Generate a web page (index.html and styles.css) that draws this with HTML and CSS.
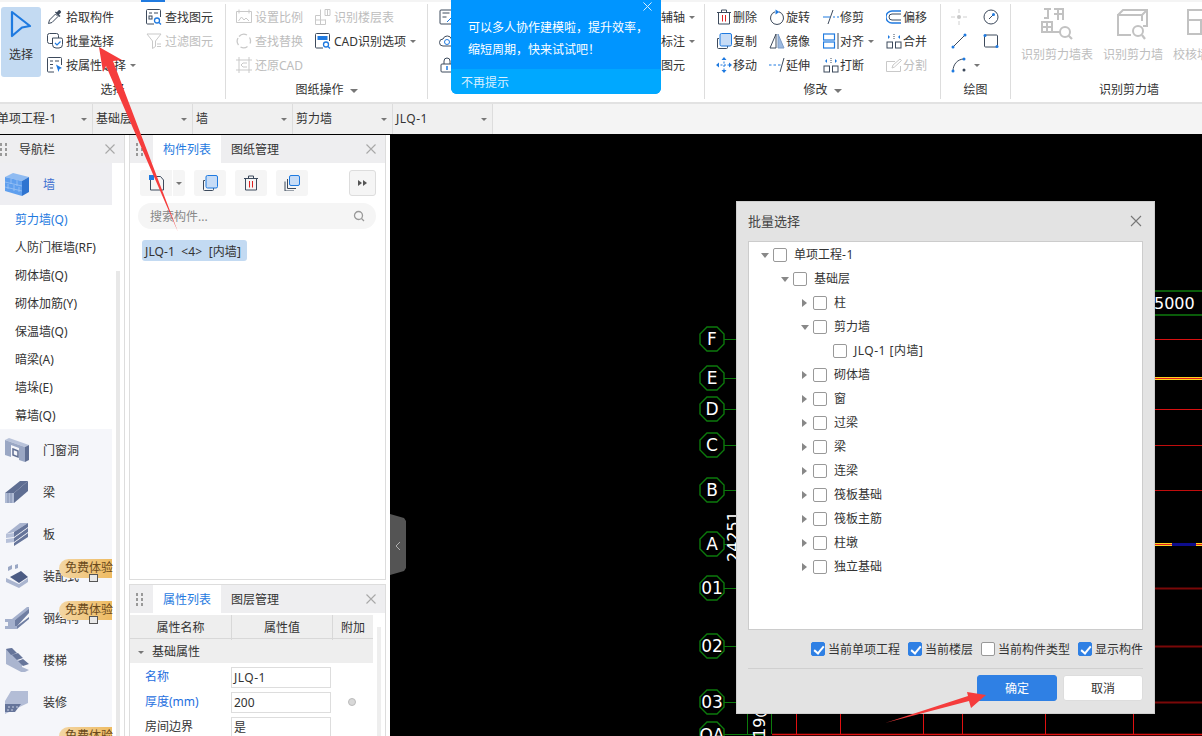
FILE: index.html
```html
<!DOCTYPE html>
<html lang="zh-CN">
  <head>
    <meta charset="UTF-8" />
    <title>批量选择</title>
    <link rel="stylesheet" href="styles.css">
  </head>
  <body>
    <svg class="defs" width="0" height="0">
      <defs>
        <g id="grip" fill="#999"><rect x="0" y="0" width="2" height="3"/><rect x="5" y="0" width="2" height="3"/><rect x="0" y="5" width="2" height="3"/><rect x="5" y="5" width="2" height="3"/><rect x="0" y="10" width="2" height="3"/><rect x="5" y="10" width="2" height="3"/></g>
        <symbol id="i-x" viewBox="0 0 10 10"><path d="M.5.5l9 9M9.500.5l-9 9" stroke="currentColor" stroke-width="1.100"/></symbol>
        <symbol id="i-pick" viewBox="0 0 16 16"><path d="M1.500 14.500l1-3.500 6-6 2.500 2.500-6 6z" fill="#fff" stroke="#3d4a5c"/><path d="M8 3.500l4.500 4.500 1-1-1.500-1.500 2-2c.8-.8-1.500-3-2.300-2.300l-2 2-1-.8z" fill="#3d4a5c"/></symbol>
        <symbol id="i-batch" viewBox="0 0 16 16"><rect x="0.500" y="0.500" width="11" height="10" rx="2" fill="none" stroke="#3d4a5c"/><path d="M5.500 5h8.500a1.500 1.500 0 011.500 1.500v5a3.500 3.500 0 01-3.500 3.500H9a3.500 3.500 0 01-3.500-3.500z" fill="#fff" stroke="#3d4a5c"/><path d="M8 10l2 2 3.500-3.500" fill="none" stroke="#1f7ae0" stroke-width="1.200"/></symbol>
        <symbol id="i-attr" viewBox="0 0 16 16"><path d="M7 15H1.500a1 1 0 01-1-1V1.500a1 1 0 011-1h12a1 1 0 011 1V8" fill="none" stroke="#3d4a5c"/><path d="M3 4h3M8 4h4M3 7.500h3M3 11h3" stroke="#3d4a5c"/><path d="M9 7.500l6 3.500-2.500 1-1 3z" fill="#1f7ae0"/></symbol>
        <symbol id="i-find" viewBox="0 0 16 16"><path d="M8 15H1.500a1 1 0 01-1-1V1.500a1 1 0 011-1h12a1 1 0 011 1V8" fill="none" stroke="#3d4a5c"/><path d="M3 4h3M8 4h4" stroke="#3d4a5c"/><rect x="3" y="7" width="3" height="3" fill="none" stroke="#3d4a5c"/><circle cx="11" cy="11.500" r="2.500" fill="none" stroke="#1f7ae0" stroke-width="1.300"/><path d="M13 13.500l2 2" stroke="#1f7ae0" stroke-width="1.300"/></symbol>
        <symbol id="i-filter" viewBox="0 0 16 16"><path d="M1 1h14l-5.500 7v5.500l-3 2V8z" fill="none" stroke="#c9c9c9"/><path d="M11 11h4M11 13.500h4" stroke="#c9c9c9"/></symbol>
        <symbol id="i-scale" viewBox="0 0 16 16"><path d="M.5 2.500h15v11H.5z" fill="none" stroke="#c9c9c9"/><path d="M3 .5v4M13 .5v4M2.500 12l3-4 2.500 3 2-2 3 3" fill="none" stroke="#c9c9c9"/></symbol>
        <symbol id="i-table" viewBox="0 0 16 16"><path d="M5.500.5v6h-5v9h10v-5M5.500 6.500v9M.5 11h10M10 .5h5v6h-5zM12.500.5v6" fill="none" stroke="#c9c9c9"/></symbol>
        <symbol id="i-replace" viewBox="0 0 16 16"><path d="M3 3.500a6.500 6.500 0 018-1.500M13.500 4.500a6.500 6.500 0 01.5 6M2 5a6.500 6.500 0 00.5 7M4.500 14a6.500 6.500 0 007-.500" fill="none" stroke="#c9c9c9" stroke-width="1.300"/></symbol>
        <symbol id="i-cad" viewBox="0 0 16 16"><path d="M8 15H1.500a1 1 0 01-1-1V1.500a1 1 0 011-1h12a1 1 0 011 1V8" fill="none" stroke="#3d4a5c"/><rect x="2.500" y="3" width="10" height="4" fill="#1f7ae0"/><circle cx="11" cy="11.500" r="2.500" fill="none" stroke="#1f7ae0" stroke-width="1.300"/><path d="M13 13.500l2 2" stroke="#1f7ae0" stroke-width="1.300"/></symbol>
        <symbol id="i-restore" viewBox="0 0 16 16"><path d="M3 0v16M13 0v16M0 3h16M0 13h16M11 6H7l-2 2 2 2h4" fill="none" stroke="#c9c9c9"/></symbol>
        <symbol id="i-doc" viewBox="0 0 16 16"><rect x="1" y="1" width="13" height="14" rx="1" fill="none" stroke="#3d4a5c"/><path d="M3.500 4h7M3.500 8h4" stroke="#3d4a5c"/><path d="M8 13l5-5" stroke="#1f7ae0"/></symbol>
        <symbol id="i-cloud" viewBox="0 0 16 16"><path d="M4 13a3.500 3.500 0 010-7 4.500 4.500 0 018.500 0 3.500 3.500 0 010 7z" fill="none" stroke="#3d4a5c"/><circle cx="8" cy="9" r="2.500" fill="none" stroke="#1f7ae0"/></symbol>
        <symbol id="i-lock" viewBox="0 0 16 16"><path d="M5 7V4a3 3 0 016 0v3" fill="none" stroke="#3d4a5c"/><rect x="2" y="7" width="12" height="8" rx="1" fill="none" stroke="#3d4a5c"/><path d="M8 9v4" stroke="#1f7ae0" stroke-width="1.500"/></symbol>
        <symbol id="i-del" viewBox="0 0 16 16"><path d="M1 3.500h14M5.500 3.500V1h5v2.500" fill="none" stroke="#3d4a5c"/><path d="M2.500 3.500V15h11V3.500" fill="none" stroke="#3d4a5c"/><path d="M6.500 6v6.500M9.500 6v6.500" stroke="#e02020"/></symbol>
        <symbol id="i-rotate" viewBox="0 0 16 16"><path d="M10 2.800A6.500 6.500 0 1 1 6 2.800" fill="none" stroke="#3d4a5c"/><path d="M6.500 .5v5l4-2.500z" fill="#1f7ae0"/></symbol>
        <symbol id="i-trim" viewBox="0 0 16 16"><path d="M0 8h7" stroke="#1f7ae0"/><path d="M10 8h2M14 8h2" stroke="#1f7ae0"/><path d="M5 15L10 1" stroke="#3d4a5c"/></symbol>
        <symbol id="i-offset" viewBox="0 0 16 16"><path d="M15 2H6a6 6 0 000 12h9" fill="none" stroke="#1f7ae0" stroke-width="1.300"/><path d="M15 5H6a3 3 0 000 6h9" fill="none" stroke="#3d4a5c"/></symbol>
        <symbol id="i-copy" viewBox="0 0 16 16"><path d="M3 5.500H1.500v9a1 1 0 001 1h8a1 1 0 001-1V13" fill="none" stroke="#3d4a5c"/><rect x="4" y="0.500" width="11.500" height="12.500" rx="1.500" fill="#c7dcf6" stroke="#1f7ae0"/></symbol>
        <symbol id="i-mirror" viewBox="0 0 16 16"><path d="M1 15L7 1v14z" fill="#fff" stroke="#3d4a5c"/><path d="M15 15L9 1v14z" fill="#9cb9df" stroke="#7d9cc6"/></symbol>
        <symbol id="i-align" viewBox="0 0 16 16"><rect x="0.500" y="1" width="11" height="6" fill="none" stroke="#1f7ae0" stroke-width="1.200"/><rect x="0.500" y="9" width="11" height="6" fill="none" stroke="#1f7ae0" stroke-width="1.200"/><path d="M15 0v16" stroke="#3d4a5c"/></symbol>
        <symbol id="i-merge" viewBox="0 0 16 16"><rect x="1" y="9" width="5.500" height="6" fill="none" stroke="#3d4a5c"/><rect x="9.500" y="9" width="5.500" height="6" fill="none" stroke="#3d4a5c"/><path d="M2 2l2 2-2 2zM14 2l-2 2 2 2z" fill="#1f7ae0"/><path d="M8 1v5" stroke="#3d4a5c" stroke-dasharray="1 1"/></symbol>
        <symbol id="i-move" viewBox="0 0 16 16"><path d="M8 1v14M1 8h14" stroke="#1f7ae0" stroke-dasharray="2 1.500"/><path d="M8 0l2.500 3h-5zM8 16l-2.500-3h5zM0 8l3-2.500v5zM16 8l-3 2.500v-5z" fill="#1f7ae0"/></symbol>
        <symbol id="i-extend" viewBox="0 0 16 16"><path d="M0 8h2.500M4.500 8h2.500M9 8h2.500" stroke="#1f7ae0"/><path d="M11 15L15 1" stroke="#3d4a5c"/></symbol>
        <symbol id="i-break" viewBox="0 0 16 16"><rect x="1" y="9" width="5.500" height="6" fill="none" stroke="#3d4a5c"/><rect x="9.500" y="9" width="5.500" height="6" fill="none" stroke="#3d4a5c"/><path d="M4 2L2 4l2 2zM12 2l2 2-2 2z" fill="#1f7ae0"/><path d="M8 1v5" stroke="#3d4a5c" stroke-dasharray="1 1"/></symbol>
        <symbol id="i-split" viewBox="0 0 16 16"><path d="M14.500 9v5.500h-14v-10H9" fill="none" stroke="#c9c9c9"/><path d="M6 11l1-3 7-6 1.500 1.500-7 6.500z" fill="none" stroke="#c9c9c9"/></symbol>
        <symbol id="i-point" viewBox="0 0 16 16"><path d="M0 8h4M12 8h4M8 0v4M8 12v4" stroke="#d0d0d0"/><circle cx="8" cy="8" r="2" fill="#c8c8c8"/></symbol>
        <symbol id="i-circle" viewBox="0 0 16 16"><circle cx="8" cy="8" r="7" fill="none" stroke="#3d4a5c"/><path d="M6 10l4-4" stroke="#3d4a5c"/><circle cx="10.500" cy="5.500" r="1.500" fill="#1f7ae0"/></symbol>
        <symbol id="i-line" viewBox="0 0 16 16"><path d="M2 14L14 2" stroke="#3d4a5c"/><circle cx="2" cy="14" r="1.500" fill="#1f7ae0"/><circle cx="14" cy="2" r="1.500" fill="#1f7ae0"/></symbol>
        <symbol id="i-rect" viewBox="0 0 16 16"><rect x="1.500" y="2" width="13" height="12" rx="1" fill="none" stroke="#3d4a5c"/><circle cx="2" cy="2.500" r="1.500" fill="#1f7ae0"/><circle cx="14" cy="13.500" r="1.500" fill="#1f7ae0"/></symbol>
        <symbol id="i-arc" viewBox="0 0 16 16"><path d="M2 14C2 7 7 2 13 2" fill="none" stroke="#3d4a5c"/><circle cx="2" cy="14" r="1.500" fill="#1f7ae0"/><circle cx="13" cy="2" r="1.500" fill="#1f7ae0"/><circle cx="13" cy="13" r="1.500" fill="#3d4a5c"/></symbol>
        <symbol id="b-table" viewBox="0 0 32 32"><path d="M3 1h7M7 1v9H3M13 1h9v11M17 1v11M13 6h9M1 14h10v10H1zM6 14v10M1 19h10M11 24h10" fill="none" stroke="#c2c2c2" stroke-width="2"/><circle cx="24" cy="24" r="5" fill="#fff" stroke="#c2c2c2" stroke-width="2"/><path d="M27.500 27.500L31 31" stroke="#c2c2c2" stroke-width="2.200"/></symbol>
        <symbol id="b-wall" viewBox="0 0 32 32"><path d="M14 27H1V7h24v6M1 7l5-5h24v16l-4 0M25 7l5-5" fill="none" stroke="#c2c2c2" stroke-width="2"/><circle cx="21" cy="23" r="5" fill="#fff" stroke="#c2c2c2" stroke-width="2"/><path d="M25 27l3 4" stroke="#c2c2c2" stroke-width="2.200"/></symbol>
        <symbol id="b-check" viewBox="0 0 32 32"><path d="M1 2h30v24H1zM1 12h30M14 12v14" fill="none" stroke="#c2c2c2" stroke-width="2"/></symbol>
        <symbol id="n-wall" viewBox="0 0 24 24"><path d="M0 5L8 1l16 4-7 4z" fill="#8fbbf2"/><path d="M0 5l17 4v15L0 19z" fill="#5f9fee"/><path d="M17 9l7-4v15l-7 4z" fill="#2f74d0"/><path d="M0 10l17 4M0 15l17 4M6 7v5M12 8v6M3 12v5M9 13v6M14 15v5" stroke="#9cc3f4" fill="none" stroke-width=".8"/></symbol>
        <symbol id="n-door" viewBox="0 0 24 24"><path d="M0 2l4-2 20 7-4 2z" fill="#b9c3da"/><path d="M0 2l20 7v15L14 22V10L6 7v12l-6-2z" fill="#9aa7c4"/><path d="M20 9l4-2v15l-4 2z" fill="#5f6e92"/><path d="M8 11l5 2v6l-5-2z" fill="none" stroke="#5f6e92" stroke-width="1.500"/></symbol>
        <symbol id="n-beam" viewBox="0 0 24 24"><path d="M0 13L15 1h8L9 13z" fill="#5f6e92"/><path d="M0 13h9v10H0z" fill="#b0bbd4"/><path d="M9 13L23 1v10L9 23z" fill="#5f6e92"/><path d="M3 13v10M6 13v10" stroke="#8290b0"/></symbol>
        <symbol id="n-slab" viewBox="0 0 24 24"><path d="M1 12L15 1h8L9 10z" fill="#a9b4cf"/><path d="M1 12l8-1v4l-8 1zM1 17l8-1v4l-8 1z" fill="#b7c1d9"/><path d="M9 10L23 1v4L9 15zM9 16L23 6v4L9 20zM9 21l14-10v4L9 24z" fill="#66759a"/></symbol>
        <symbol id="n-asm" viewBox="0 0 24 24"><path d="M5 13l11-6 7 6-9 6z" fill="#4b5b83"/><path d="M1 14l13 6 9-6v4l-9 6-13-6z" fill="#aab5cf"/><path d="M3 3l4-2v4L3 7zM10 1l3-1v4l-3 1z" fill="#9aa7c4"/></symbol>
        <symbol id="n-steel" viewBox="0 0 24 24"><path d="M0 13h7L22 1h2v4L10 14v6h2v3H0v-3h3v-4H0z" fill="#a4b0cc"/><path d="M10 14L24 3v4L12 20h-2zM12 20l12-9v2L12 23z" fill="#6f7ea2"/></symbol>
        <symbol id="n-stair" viewBox="0 0 24 24"><path d="M1 1l6-1v5l5 2v5l5 2v5l7 3-6 3L1 16z" fill="#aab5cf"/><path d="M1 1l6-1 5 5-6 2zM7 7l6-2 5 5-6 2zM13 13l5-2 6 5-6 2z" fill="#66759a"/></symbol>
        <symbol id="n-finish" viewBox="0 0 24 24"><path d="M6 1h17v12L4 22 0 24V11z" fill="#b3bdd6"/><path d="M0 14h16l-6 8H0z" fill="#66759a"/><path d="M3 17h2M7 17h2M11 17h2M2 20h2M6 20h2" stroke="#c9d1e4"/></symbol>
      </defs>
    </svg>

    <header class="ribbon">
      <div class="ribbon-strip"><i></i></div>
      <div class="groups">
        <section class="group g-select">
          <div class="tools">
            <div class="select-btn">
              <svg width="22" height="28" viewBox="0 0 22 28"><path d="M2 2l18 14-8 1.500L2 26z" fill="#c7dcf6" stroke="#1f7ae0" stroke-width="2.200" stroke-linejoin="round"/></svg>
              <span>选择</span>
            </div>
            <div class="col c99">
              <div class="tool"><svg class="ic"><use href="#i-pick"/></svg><span>拾取构件</span></div>
              <div class="tool"><svg class="ic"><use href="#i-batch"/></svg><span>批量选择</span></div>
              <div class="tool"><svg class="ic"><use href="#i-attr"/></svg><span>按属性选择</span><b class="tri"></b></div>
            </div>
            <div class="col">
              <div class="tool"><svg class="ic"><use href="#i-find"/></svg><span>查找图元</span></div>
              <div class="tool off"><svg class="ic"><use href="#i-filter"/></svg><span>过滤图元</span></div>
            </div>
          </div>
          <div class="group-label">选择</div>
        </section>
        <section class="group g-drawing">
          <div class="tools">
            <div class="col c79">
              <div class="tool off"><svg class="ic"><use href="#i-scale"/></svg><span>设置比例</span></div>
              <div class="tool off"><svg class="ic"><use href="#i-replace"/></svg><span>查找替换</span></div>
              <div class="tool off"><svg class="ic"><use href="#i-restore"/></svg><span>还原CAD</span></div>
            </div>
            <div class="col">
              <div class="tool off"><svg class="ic"><use href="#i-table"/></svg><span>识别楼层表</span></div>
              <div class="tool"><svg class="ic"><use href="#i-cad"/></svg><span>CAD识别选项</span><b class="tri"></b></div>
            </div>
          </div>
          <div class="group-label">图纸操作 <b class="tri"></b></div>
        </section>
        <section class="group g-axis">
          <div class="tools">
            <div class="col c222">
              <div class="tool"><svg class="ic"><use href="#i-doc"/></svg></div>
              <div class="tool"><svg class="ic"><use href="#i-cloud"/></svg></div>
              <div class="tool"><svg class="ic"><use href="#i-lock"/></svg></div>
            </div>
            <div class="col">
              <div class="tool"><span>辅轴</span><b class="tri"></b></div>
              <div class="tool"><span>标注</span><b class="tri"></b></div>
              <div class="tool"><span>图元</span></div>
            </div>
          </div>
        </section>
        <section class="group g-edit">
          <div class="tools tight">
            <div class="col c53">
              <div class="tool"><svg class="ic"><use href="#i-del"/></svg><span>删除</span></div>
              <div class="tool"><svg class="ic"><use href="#i-copy"/></svg><span>复制</span></div>
              <div class="tool"><svg class="ic"><use href="#i-move"/></svg><span>移动</span></div>
            </div>
            <div class="col c54">
              <div class="tool"><svg class="ic"><use href="#i-rotate"/></svg><span>旋转</span></div>
              <div class="tool"><svg class="ic"><use href="#i-mirror"/></svg><span>镜像</span></div>
              <div class="tool"><svg class="ic"><use href="#i-extend"/></svg><span>延伸</span></div>
            </div>
            <div class="col c63">
              <div class="tool"><svg class="ic"><use href="#i-trim"/></svg><span>修剪</span></div>
              <div class="tool"><svg class="ic"><use href="#i-align"/></svg><span>对齐</span><b class="tri"></b></div>
              <div class="tool"><svg class="ic"><use href="#i-break"/></svg><span>打断</span></div>
            </div>
            <div class="col">
              <div class="tool"><svg class="ic"><use href="#i-offset"/></svg><span>偏移</span></div>
              <div class="tool"><svg class="ic"><use href="#i-merge"/></svg><span>合并</span></div>
              <div class="tool off"><svg class="ic"><use href="#i-split"/></svg><span>分割</span></div>
            </div>
          </div>
          <div class="group-label">修改 <b class="tri"></b></div>
        </section>
        <section class="group g-draw">
          <div class="tools">
            <div class="col c32">
              <div class="tool"><svg class="ic"><use href="#i-point"/></svg></div>
              <div class="tool"><svg class="ic"><use href="#i-line"/></svg></div>
              <div class="tool"><svg class="ic"><use href="#i-arc"/></svg><b class="tri"></b></div>
            </div>
            <div class="col">
              <div class="tool"><svg class="ic"><use href="#i-circle"/></svg></div>
              <div class="tool"><svg class="ic"><use href="#i-rect"/></svg></div>
            </div>
          </div>
          <div class="group-label">绘图</div>
        </section>
        <section class="group g-shear">
          <div class="tools big-tools">
            <div class="big off"><svg width="32" height="32"><use href="#b-table"/></svg><span>识别剪力墙表</span></div>
            <div class="big off"><svg width="32" height="32"><use href="#b-wall"/></svg><span>识别剪力墙</span></div>
            <div class="big off"><svg width="32" height="32"><use href="#b-check"/></svg><span>校核墙图元</span></div>
          </div>
          <div class="group-label">识别剪力墙</div>
        </section>
      </div>
    </header>

    <div class="selectors">
      <div class="sel first"><span>单项工程<i class="latin">-1</i></span><b class="tri"></b></div>
      <div class="sel"><span>基础层</span><b class="tri"></b></div>
      <div class="sel"><span>墙</span><b class="tri"></b></div>
      <div class="sel"><span>剪力墙</span><b class="tri"></b></div>
      <div class="sel"><span class="latin">JLQ-1</span><b class="tri"></b></div>
    </div>

    <main class="workspace">
      <aside class="nav">
        <div class="nav-head">
          <svg class="grip" width="7" height="13"><use href="#grip"/></svg>
          <span class="nav-title">导航栏</span>
          <svg class="x"><use href="#i-x"/></svg>
        </div>
        <div class="nav-body">
          <div class="nav-list">
            <div class="nav-big current"><svg><use href="#n-wall"/></svg><span>墙</span></div>
            <div class="nav-sub on">剪力墙(Q)</div>
            <div class="nav-sub">人防门框墙(RF)</div>
            <div class="nav-sub">砌体墙(Q)</div>
            <div class="nav-sub">砌体加筋(Y)</div>
            <div class="nav-sub">保温墙(Q)</div>
            <div class="nav-sub">暗梁(A)</div>
            <div class="nav-sub">墙垛(E)</div>
            <div class="nav-sub">幕墙(Q)</div>
            <div class="nav-big"><svg><use href="#n-door"/></svg><span>门窗洞</span></div>
            <div class="nav-big"><svg><use href="#n-beam"/></svg><span>梁</span></div>
            <div class="nav-big"><svg><use href="#n-slab"/></svg><span>板</span></div>
            <div class="nav-big"><svg><use href="#n-asm"/></svg><span>装配式</span><em class="lock"></em><em class="badge">免费体验</em></div>
            <div class="nav-big"><svg><use href="#n-steel"/></svg><span>钢结构</span><em class="lock"></em><em class="badge">免费体验</em></div>
            <div class="nav-big"><svg><use href="#n-stair"/></svg><span>楼梯</span></div>
            <div class="nav-big"><svg><use href="#n-finish"/></svg><span>装修</span></div>
            <div class="nav-big"><em class="badge">免费体验</em></div>
          </div>
          <div class="nav-scroll"></div>
        </div>
      </aside>

      <div class="panels">
        <section class="panel p-list">
          <div class="panel-head">
            <svg class="grip" width="7" height="13"><use href="#grip"/></svg>
            <span class="tab active">构件列表</span>
            <span class="tab">图纸管理</span>
            <svg class="x"><use href="#i-x"/></svg>
          </div>
          <div class="list-tools">
            <div class="tbtn split">
              <svg width="16" height="16" viewBox="0 0 16 16"><path d="M1.500 3.500v11.500h13V5l-3-3.500H6" fill="none" stroke="#3d4a5c"/><rect x="0" y="0" width="5" height="5" fill="#1f7ae0"/></svg>
              <span class="split-arrow"><b class="tri"></b></span>
            </div>
            <div class="tbtn"><svg width="16" height="16"><use href="#i-copy"/></svg></div>
            <div class="tbtn"><svg width="16" height="16"><use href="#i-del"/></svg></div>
            <div class="tbtn"><svg width="16" height="16" viewBox="0 0 16 16"><path d="M3.500 4v9.500H12M1 6.500V16h9" fill="none" stroke="#3d4a5c"/><rect x="5.500" y="0.500" width="10" height="10" rx="1.500" fill="#c7dcf6" stroke="#1f7ae0"/></svg></div>
            <div class="tbtn more"><i></i><i></i></div>
          </div>
          <div class="search">
            <span>搜索构件...</span>
            <svg width="12" height="12" viewBox="0 0 12 12"><circle cx="5.500" cy="5.500" r="4" fill="none" stroke="#999" stroke-width="1.300"/><path d="M8.500 8.500L11 11" stroke="#999" stroke-width="1.300"/></svg>
          </div>
          <div class="list-item">JLQ-1&nbsp; &lt;4&gt;&nbsp; [内墙]</div>
        </section>
        <section class="panel p-attr">
          <div class="panel-head">
            <svg class="grip" width="7" height="13"><use href="#grip"/></svg>
            <span class="tab active">属性列表</span>
            <span class="tab">图层管理</span>
            <svg class="x"><use href="#i-x"/></svg>
          </div>
          <div class="attr-body">
            <div class="attr-table">
              <div class="attr-top"><span>属性名称</span><span>属性值</span><span>附加</span></div>
              <div class="attr-section"><b class="tri"></b>基础属性</div>
              <div class="attr-row"><label class="blue">名称</label><div class="val latin">JLQ-1</div><div></div></div>
              <div class="attr-row"><label class="blue">厚度(mm)</label><div class="val">200</div><div class="dot-cell"><i></i></div></div>
              <div class="attr-row"><label>房间边界</label><div class="val">是</div><div></div></div>
            </div>
            <div class="attr-scroll"></div>
          </div>
        </section>
      </div>

      <div class="canvas">
        <svg width="812" height="601" viewBox="390 135 812 601">
          <defs><polygon id="bub" points="-5,-12 5,-12 12,-5 12,5 5,12 -5,12 -12,5 -12,-5" fill="#000" stroke="#0c7a0c" stroke-width="1.400"/></defs>
          <path d="M390 514l14 4 2 3v47l-2 3-14 4z" fill="#545454"/>
          <path d="M400 542l-4 4 4 4" fill="none" stroke="#b0b0b0"/>
          <g stroke="#0c7a0c" stroke-width="1">
            <path d="M724 339.500h20M724 378.500h20M724 409.500h20M724 445.500h20M724 490.500h20M724 544.500h20M724 588.500h20M724 646.500h20M724 702.500h20M724 734.500h40"/>
          </g>
          <path d="M1155 291h47M1155 315h47" stroke="#0a5c0a" stroke-width="2"/>
          <path d="M1155 339.500h47M1155 409.500h47" stroke="#d81010"/>
          <path d="M1155 445.500h47M1155 490.500h47" stroke="#c00d0d"/>
          <path d="M1155 378.500h47M1155 544.500h47" stroke="#ffd21f" stroke-width="3"/>
          <path d="M1155 378.500h47M1155 544.500h47" stroke="#e02020" stroke-width="1"/>
          <path d="M1172 544.500h24" stroke="#0d0d8c" stroke-width="3"/>
          <path d="M1155 588.500h47M1155 646.500h47M1155 702.500h47" stroke="#7a0808" stroke-width="2"/>
          <path d="M772 734.500h430" stroke="#e01010" stroke-width="1.500"/>
          <path d="M796.500 714v20M840.500 714v20M923.500 714v20M962.500 714v20M1045.500 714v20M1133.500 714v20" stroke="#e01010"/>
          <path d="M747.500 714v20M771.500 714v20" stroke="#0c7a0c"/>
          <g class="bubbles">
            <use href="#bub" x="712" y="339"/><text x="712" y="345">F</text>
            <use href="#bub" x="712" y="378"/><text x="712" y="384">E</text>
            <use href="#bub" x="712" y="409"/><text x="712" y="415">D</text>
            <use href="#bub" x="712" y="445"/><text x="712" y="451">C</text>
            <use href="#bub" x="712" y="490"/><text x="712" y="496">B</text>
            <use href="#bub" x="712" y="544"/><text x="712" y="550">A</text>
            <use href="#bub" x="712" y="588"/><text x="712" y="594">01</text>
            <use href="#bub" x="712" y="646"/><text x="712" y="652">02</text>
            <use href="#bub" x="712" y="702"/><text x="712" y="708">03</text>
            <use href="#bub" x="712" y="734"/><text x="712" y="741">QA</text>
          </g>
          <text class="dim" x="1154" y="309">5000</text>
          <text class="dim" transform="translate(739 562) rotate(-90)">24251</text>
          <text class="dim" transform="translate(765 738) rotate(-90)">19@</text>
        </svg>
      </div>
    </main>

    <div class="tip">
      <svg class="tip-x" width="9" height="9"><use href="#i-x"/></svg>
      <div class="tip-body">
        <p>可以多人协作建模啦，提升效率，</p>
        <p>缩短周期，快来试试吧！</p>
      </div>
      <div class="tip-foot">不再提示</div>
    </div>

    <div class="dialog">
      <div class="dialog-head">
        <span>批量选择</span>
        <svg width="12" height="12" viewBox="0 0 12 12"><path d="M1 1l10 10M11 1L1 11" stroke="#777" stroke-width="1.100"/></svg>
      </div>
      <div class="tree">
        <div class="node lv0"><b class="open"></b><i class="cb"></i><span>单项工程<i class="latin">-1</i></span></div>
        <div class="node lv1"><b class="open"></b><i class="cb"></i><span>基础层</span></div>
        <div class="node lv2"><b class="shut"></b><i class="cb"></i><span>柱</span></div>
        <div class="node lv2"><b class="open"></b><i class="cb"></i><span>剪力墙</span></div>
        <div class="node lv3"><b></b><i class="cb"></i><span class="latin">JLQ-1 [内墙]</span></div>
        <div class="node lv2"><b class="shut"></b><i class="cb"></i><span>砌体墙</span></div>
        <div class="node lv2"><b class="shut"></b><i class="cb"></i><span>窗</span></div>
        <div class="node lv2"><b class="shut"></b><i class="cb"></i><span>过梁</span></div>
        <div class="node lv2"><b class="shut"></b><i class="cb"></i><span>梁</span></div>
        <div class="node lv2"><b class="shut"></b><i class="cb"></i><span>连梁</span></div>
        <div class="node lv2"><b class="shut"></b><i class="cb"></i><span>筏板基础</span></div>
        <div class="node lv2"><b class="shut"></b><i class="cb"></i><span>筏板主筋</span></div>
        <div class="node lv2"><b class="shut"></b><i class="cb"></i><span>柱墩</span></div>
        <div class="node lv2"><b class="shut"></b><i class="cb"></i><span>独立基础</span></div>
      </div>
      <div class="options">
        <div class="opt"><i class="cb checked"></i><span>当前单项工程</span></div>
        <div class="opt"><i class="cb checked"></i><span>当前楼层</span></div>
        <div class="opt"><i class="cb"></i><span>当前构件类型</span></div>
        <div class="opt"><i class="cb checked"></i><span>显示构件</span></div>
      </div>
      <div class="dialog-foot">
        <button class="btn primary">确定</button>
        <button class="btn">取消</button>
      </div>
    </div>

    <svg class="arrows" width="1202" height="736">
      <polygon points="99,47 122,60 113,61 178,232 106,66 103,72" fill="#f53c3c"/>
      <polygon points="986,695 971,708 969,701 885,723 968,696 967,692" fill="#f53c3c"/>
    </svg>
  </body>
</html>
```

FILE: styles.css
```css
* {
  box-sizing: border-box;
}

html, body {
  margin: 0;
  height: 736px;
  overflow: hidden;
}

body {
  position: relative;
  width: 1202px;
  background: #fff;
  font-family: "Noto Sans", "Noto Sans CJK SC", sans-serif;
  font-size: 12px;
  line-height: 16px;
  color: #333;
}

p {
  margin: 0;
}

i.latin,
.latin {
  font-style: normal;
  letter-spacing: .5px;
}

.defs {
  position: absolute;
}

.tri {
  display: inline-block;
  width: 0;
  height: 0;
  border-left: 3px solid transparent;
  border-right: 3px solid transparent;
  border-top: 3px solid #777;
  vertical-align: middle;
}

.x {
  flex: none;
  width: 10px;
  height: 10px;
  margin-left: auto;
  margin-right: 9px;
  color: #a8a8a8;
}

/* ribbon */
.ribbon {
  height: 104px;
  border-bottom: 2px solid #e2e2e2;
  overflow: hidden;
}

.ribbon-strip {
  height: 4px;
  border-top: 2px solid #f4f4f4;
}

.ribbon-strip i {
  display: block;
  width: 24px;
  height: 2px;
  margin: -2px 0 0 141px;
  background: #1f7ae0;
}

.groups {
  display: flex;
}

.group {
  flex: none;
  height: 95px;
  border-right: 1px solid #ddd;
}

.g-select { width: 226px; }
.g-drawing { width: 202px; }
.g-axis { width: 277px; }
.g-edit { width: 236px; }
.g-draw { width: 70px; }
.g-shear { width: 236px; border-right: none; }

.tools {
  display: flex;
  height: 75px;
  padding-top: 1px;
}

.g-drawing .tools,
.g-draw .tools,
.g-shear .tools { padding-left: 10px; }
.g-axis .tools,
.g-edit .tools { padding-left: 11px; }

.col.c99 { width: 99px; }
.col.c79 { width: 79px; }
.col.c222 { width: 222px; }
.col.c53 { width: 53px; }
.col.c54 { width: 54px; }
.col.c63 { width: 63px; }
.col.c32 { width: 32px; }

.tool {
  display: flex;
  align-items: center;
  height: 24px;
  white-space: nowrap;
}

.tool span,
.nav-title,
.nav-big span,
.opt span,
.search span {
  padding-top: 2px;
}

.tool .ic {
  flex: none;
  width: 16px;
  height: 16px;
  margin-right: 3px;
}

.tight .tool .ic {
  margin-right: 1px;
}

.tool .tri {
  margin-left: 4px;
}

.off {
  color: #bdbdbd;
}

.select-btn {
  display: flex;
  flex-direction: column;
  align-items: center;
  width: 40px;
  height: 70px;
  margin: 2px 6px 0 1px;
  padding-top: 3px;
  border-radius: 3px;
  background: #c3daf2;
}

.select-btn span {
  margin-top: 9px;
}

.group-label {
  height: 20px;
  padding-top: 1px;
  line-height: 20px;
  text-align: center;
}

.group-label .tri {
  margin-left: 3px;
  border-left-width: 4px;
  border-right-width: 4px;
  border-top-width: 4px;
}

.big-tools {
  gap: 10px;
}

.big {
  display: flex;
  flex-direction: column;
  align-items: center;
  flex: none;
  padding-top: 3px;
  white-space: nowrap;
}

.big span {
  margin-top: 7px;
}

/* drop downs under the ribbon */
.selectors {
  display: flex;
  height: 31px;
  background: #f4f4f4;
  border-bottom: 1px solid #000;
}

.sel {
  display: flex;
  align-items: center;
  justify-content: space-between;
  width: 100px;
  padding: 0 5px 0 3px;
  background: #f0f0f0;
  border-right: 1px solid #ddd;
}

.sel.first {
  width: 93px;
  padding-left: 0;
  overflow: hidden;
}

.sel.first > span {
  margin-left: -3px;
}

/* workspace */
.workspace {
  display: flex;
  height: 601px;
  background: #fff;
}

.nav {
  flex: none;
  width: 125px;
  border-right: 1px solid #ddd;
  overflow: hidden;
}

.nav-head {
  display: flex;
  align-items: center;
  height: 28px;
  background: #eeeef0;
}

.nav-title {
  margin-left: 12px;
}

.nav-body {
  display: flex;
}

.nav-list {
  flex: none;
  width: 112px;
}

.nav-big {
  position: relative;
  display: flex;
  align-items: center;
  height: 42px;
  padding-left: 5px;
  background: #f5f6fa;
  white-space: nowrap;
}

.nav-big svg {
  flex: none;
  width: 24px;
  height: 24px;
  margin-right: 14px;
}

.nav-big.current {
  background: #eeeef2;
  color: #3c6fd0;
}

.nav-sub {
  height: 28px;
  padding: 1px 0 0 15px;
  line-height: 28px;
  background: #fff;
  white-space: nowrap;
}

.nav-sub.on {
  color: #1f7ae0;
}

.badge {
  position: absolute;
  top: 4px;
  right: 0;
  width: 53px;
  height: 19px;
  padding-left: 6px;
  border-radius: 10px 0 0 10px;
  background: linear-gradient(90deg, #f3d6a4, #eebb62);
  color: #6a4a1c;
  font-style: normal;
  line-height: 18px;
}

.lock {
  position: absolute;
  top: 19px;
  left: 89px;
  width: 9px;
  height: 8px;
  border: 1px solid #555;
  background: #e8e8e8;
  z-index: 1;
}

.nav-scroll {
  flex: none;
  width: 4px;
  margin: 108px 0 0 4px;
  background: #e8e8e8;
}

.panels {
  display: flex;
  flex-direction: column;
  flex: none;
  width: 265px;
  padding: 0 4px;
  background: #fff;
}

.panel {
  flex: none;
  width: 257px;
  border: 1px solid #ddd;
  border-top: none;
}

.p-list {
  height: 445px;
}

.p-attr {
  height: 152px;
  margin-top: 4px;
  border-top: 1px solid #ddd;
  border-bottom: none;
  overflow: hidden;
}

.panel-head {
  display: flex;
  align-items: center;
  height: 28px;
  background: #eeeef0;
}

.grip {
  flex: none;
}

.panel-head .grip {
  margin: 0 10px 0 6px;
}

.tab {
  height: 28px;
  padding: 1px 10px 0;
  line-height: 28px;
}

.tab.active {
  background: #fff;
  color: #1f7ae0;
}

.list-tools {
  display: flex;
  gap: 9px;
  margin: 7px 0 0 10px;
}

.tbtn {
  display: flex;
  align-items: center;
  justify-content: center;
  width: 32px;
  height: 26px;
  border-radius: 3px;
  background: #f5f5f5;
}

.tbtn.split {
  justify-content: flex-start;
  width: 45px;
  padding-left: 9px;
}

.split-arrow {
  display: flex;
  align-items: center;
  justify-content: center;
  width: 13px;
  height: 26px;
  margin-left: 7px;
  border-left: 1px solid #fff;
}

.tbtn.more {
  gap: 1px;
  width: 27px;
  margin-left: 32px;
  border: 1px solid #ddd;
}

.tbtn.more i {
  width: 0;
  height: 0;
  border-top: 3px solid transparent;
  border-bottom: 3px solid transparent;
  border-left: 4px solid #555;
}

.search {
  display: flex;
  align-items: center;
  justify-content: space-between;
  width: 238px;
  height: 26px;
  margin: 7px 0 0 8px;
  padding: 0 11px 0 12px;
  border-radius: 13px;
  background: #f5f5f5;
  color: #888;
}

.list-item {
  width: 105px;
  height: 21px;
  margin: 11px 0 0 12px;
  padding: 1px 0 0 3px;
  border-radius: 3px;
  background: #c3daf2;
  letter-spacing: .1px;
  line-height: 21px;
  white-space: nowrap;
}

.attr-body {
  display: flex;
  margin-top: 2px;
}

.attr-table {
  flex: none;
  width: 243px;
}

.attr-top {
  display: grid;
  grid-template-columns: 101px 101px 41px;
  height: 24px;
  background: #eee;
  border-bottom: 1px solid #d8d8d8;
  text-align: center;
  line-height: 25px;
}

.attr-top span + span {
  border-left: 1px solid #d8d8d8;
}

.attr-section {
  height: 24px;
  padding-left: 8px;
  background: #eee;
  line-height: 26px;
}

.attr-section .tri {
  margin-right: 8px;
}

.attr-row {
  display: grid;
  grid-template-columns: 101px 100px 42px;
  align-items: center;
  height: 25px;
  padding-top: 3px;
}

.attr-row label {
  padding-left: 15px;
}

.blue {
  color: #1f6fe0;
}

.val {
  height: 21px;
  padding-left: 2px;
  border: 1px solid #ddd;
  line-height: 19px;
}

.dot-cell {
  display: flex;
  justify-content: center;
}

.dot-cell i {
  width: 8px;
  height: 8px;
  border: 1px solid #bbb;
  border-radius: 50%;
  background: #d8d8d8;
}

.attr-scroll {
  flex: none;
  width: 4px;
  height: 120px;
  margin: 12px 0 0 4px;
  background: #eee;
}

/* drawing */
.canvas {
  flex: none;
  width: 812px;
  height: 601px;
  background: #000;
}

.canvas svg {
  display: block;
}

.bubbles text {
  fill: #fff;
  font-family: "DejaVu Sans", sans-serif;
  font-size: 17px;
  text-anchor: middle;
}

.dim {
  fill: #fff;
  font-family: "DejaVu Sans", sans-serif;
  font-size: 16px;
}

/* tip over the ribbon */
.tip {
  position: absolute;
  top: 0;
  left: 451px;
  width: 210px;
  height: 94px;
  border-radius: 0 0 6px 6px;
  background: #0095ff;
  color: #fff;
  font-family: "Noto Sans CJK TC", "Noto Sans", sans-serif;
  overflow: hidden;
}

.tip-x {
  position: absolute;
  top: 2px;
  right: 9px;
  color: #d8eeff;
}

.tip-body {
  height: 69px;
  padding: 16px 0 0 17px;
  line-height: 22px;
  white-space: nowrap;
}

.tip-foot {
  height: 25px;
  padding-left: 10px;
  background: #00a8ff;
  color: #d8f0ff;
  line-height: 25px;
}

/* dialog */
.dialog {
  position: absolute;
  top: 201px;
  left: 736px;
  width: 419px;
  height: 513px;
  padding: 0 12px 0 11px;
  border: 1px solid #cfcfcf;
  background: #e3e3e3;
}

.dialog-head {
  display: flex;
  align-items: center;
  justify-content: space-between;
  height: 39px;
  padding-bottom: 2px;
  font-size: 13px;
  color: #444;
}

.tree {
  height: 389px;
  margin-right: -1px;
  padding-top: 1px;
  border: 1px solid #ccc;
  background: #fff;
}

.node {
  display: flex;
  align-items: center;
  height: 24px;
  white-space: nowrap;
}

.node b {
  flex: none;
  display: flex;
  align-items: center;
  width: 13px;
  height: 14px;
}

.node b.open::before {
  content: "";
  border-left: 4px solid transparent;
  border-right: 4px solid transparent;
  border-top: 5px solid #888;
  margin-left: 1px;
}

.node b.shut::before {
  content: "";
  border-top: 4px solid transparent;
  border-bottom: 4px solid transparent;
  border-left: 5px solid #888;
  margin-left: 2px;
}

.lv0 { padding-left: 11px; }
.lv1 { padding-left: 31px; }
.lv2 { padding-left: 51px; }
.lv3 { padding-left: 71px; }

.cb {
  position: relative;
  flex: none;
  width: 14px;
  height: 14px;
  border: 1px solid #999;
  border-radius: 2px;
  background: #fff;
}

.node > span {
  margin-left: 7px;
}

.cb.checked {
  border-color: #2f80e4;
  background: #2f80e4;
}

.cb.checked::after {
  content: "";
  position: absolute;
  top: 1px;
  left: 4px;
  width: 4px;
  height: 8px;
  border: solid #fff;
  border-width: 0 2px 2px 0;
  transform: rotate(40deg);
}

.options {
  display: flex;
  align-items: center;
  justify-content: flex-end;
  gap: 8px;
  height: 39px;
  margin-right: -1px;
  border-bottom: 1px solid #d0d0d0;
}

.opt {
  display: flex;
  align-items: center;
  gap: 3px;
  white-space: nowrap;
}

.dialog-foot {
  display: flex;
  justify-content: flex-end;
  gap: 6px;
  margin: 6px -1px 0 0;
}

.btn {
  width: 80px;
  height: 26px;
  padding: 2px 0 0;
  border: 1px solid #ddd;
  border-radius: 3px;
  background: #fff;
  color: #333;
  font: inherit;
}

.btn.primary {
  border-color: #2f80e4;
  background: #2f80e4;
  color: #fff;
}

/* annotation arrows drawn on top of the screenshot */
.arrows {
  position: absolute;
  top: 0;
  left: 0;
  pointer-events: none;
}
```
